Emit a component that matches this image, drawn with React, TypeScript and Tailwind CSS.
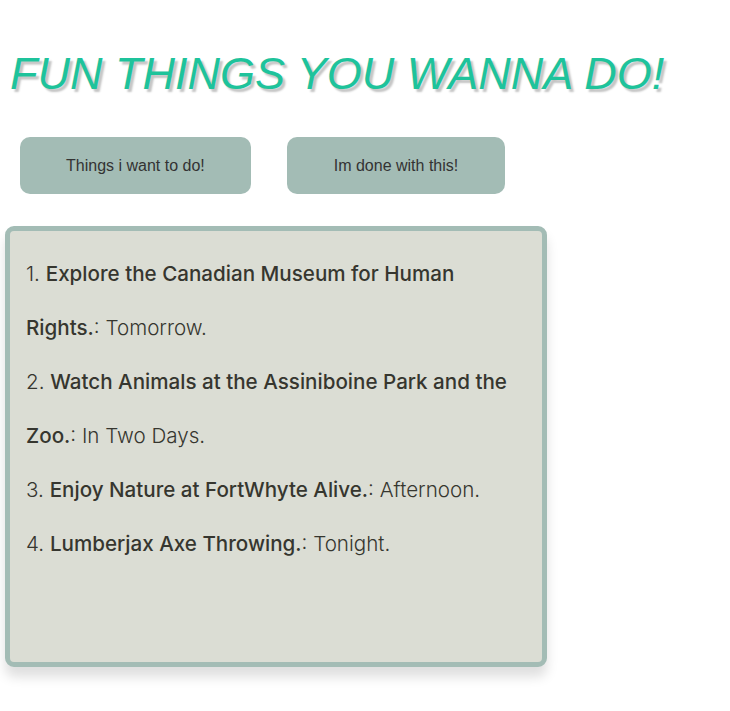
const todos = [
    { id: 1, title: "Explore the Canadian Museum for Human Rights.", when: "Tomorrow." },
    { id: 2, title: "Watch Animals at the Assiniboine Park and the Zoo.", when: "In Two Days." },
    { id: 3, title: "Enjoy Nature at FortWhyte Alive.", when: "Afternoon." },
    { id: 4, title: "Lumberjax Axe Throwing.", when: "Tonight." },
];

const App = () => {
    return (
        <div className="min-h-[711px] bg-white">
            {/* title */}
            <h1 className="pt-[49px] pl-[10px] font-['Liberation_Sans',Arial,sans-serif] text-[45px] leading-[50px] italic text-[#1ec39b] [text-shadow:3px_3px_2px_#c4c4c4]">
                FUN THINGS YOU WANNA DO!
            </h1>

            {/* buttons */}
            <div className="flex gap-[36px] pl-[20px] mt-[38px]">
                <button className="h-[57px] px-[46px] rounded-[10px] bg-[#a3bcb5] font-['Liberation_Sans',Arial,sans-serif] text-[16px] text-[#333]">
                    Things i want to do!
                </button>
                <button className="h-[57px] px-[47px] rounded-[10px] bg-[#a3bcb5] font-['Liberation_Sans',Arial,sans-serif] text-[16px] text-[#333]">
                    Im done with this!
                </button>
            </div>

            {/* list */}
            <div className="ml-[5px] mt-[32px] w-[542px] h-[441px] border-[5px] border-[#a3bcb5] rounded-[9px] bg-[#dbddd4] px-[16px] pt-[16px] shadow-[0_10px_12px_rgba(0,0,0,0.13)] font-['Inter',sans-serif] text-[20.6px] leading-[54px] text-[#36362f]">
                {todos.map((t) => (
                    <p key={t.id} className="font-light">
                        {t.id}. <span className="font-[550]">{t.title}</span>: {t.when}
                    </p>
                ))}
            </div>
        </div>
    );
};

export default App;
